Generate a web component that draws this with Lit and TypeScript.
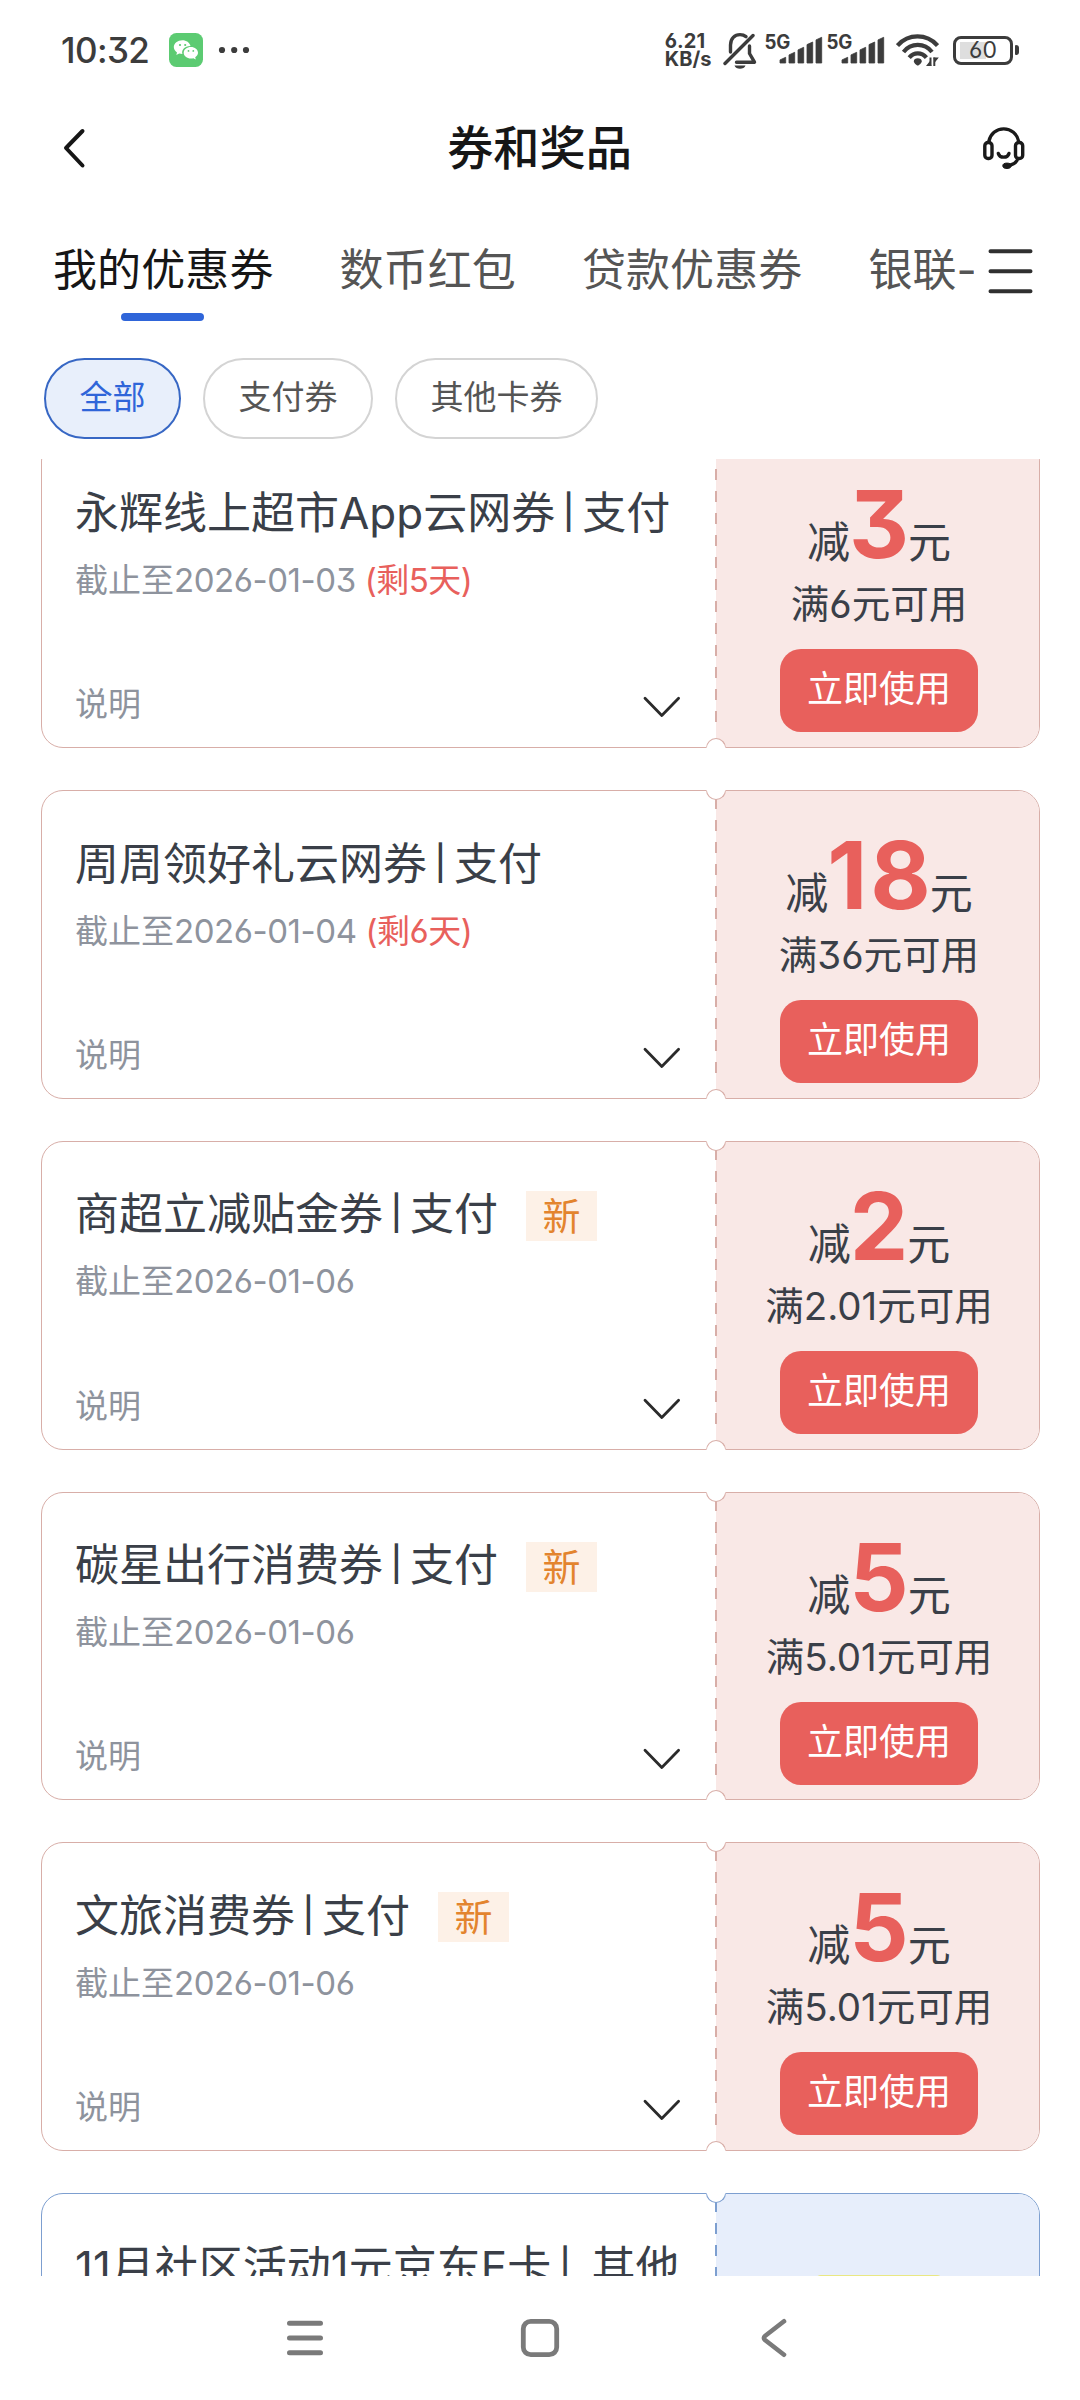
import { LitElement, html, css, svg, nothing } from "lit";
import { customElement, property, state } from "lit/decorators.js";
import { classMap } from "lit/directives/class-map.js";

interface Coupon {
  name: string;
  kind: string;
  until?: string;
  left?: string;
  fresh?: boolean;
  amount?: string;
  condition?: string;
  theme: "red" | "blue";
}

const COUPONS: Coupon[] = [
  { name: "永辉线上超市App云网券", kind: "支付", until: "2026-01-03", left: "(剩5天)", amount: "3", condition: "满6元可用", theme: "red" },
  { name: "周周领好礼云网券", kind: "支付", until: "2026-01-04", left: "(剩6天)", amount: "18", condition: "满36元可用", theme: "red" },
  { name: "商超立减贴金券", kind: "支付", until: "2026-01-06", fresh: true, amount: "2", condition: "满2.01元可用", theme: "red" },
  { name: "碳星出行消费券", kind: "支付", until: "2026-01-06", fresh: true, amount: "5", condition: "满5.01元可用", theme: "red" },
  { name: "文旅消费券", kind: "支付", until: "2026-01-06", fresh: true, amount: "5", condition: "满5.01元可用", theme: "red" },
  { name: "11月社区活动1元京东E卡", kind: " 其他", theme: "blue" },
];

@customElement("coupon-card")
export class CouponCard extends LitElement {
  @property({ attribute: false }) coupon!: Coupon;

  static styles = css`
    :host {
      display: block;
      flex: none;
    }
    .card {
      --line: #d8aea8;
      --tint: #f9e8e6;
      position: relative;
      box-sizing: border-box;
      height: 308.75px;
      display: grid;
      grid-template-columns: 673px 1fr;
      border: 1px solid var(--line);
      border-radius: 22px;
      background: #fff;
    }
    .card.blue {
      --line: #7d9fd0;
      --tint: #e7eefb;
    }
    .info {
      display: flex;
      flex-direction: column;
      padding: 42.5px 34px 20px 33px;
    }
    .title {
      display: flex;
      align-items: center;
      height: 60px;
      font-size: 44px;
      line-height: 60px;
      color: #3a3f48;
      white-space: pre;
    }
    .bar {
      display: inline-block;
      width: 27px;
      text-align: center;
      font-size: 34px;
      font-weight: 500;
      line-height: 1;
      vertical-align: 5px;
    }
    .blue .bar {
      width: 28px;
    }
    .tag {
      width: 71px;
      height: 50px;
      margin: 3px 0 0 28px;
      background: #fdf1e7;
      color: #e3842e;
      font-size: 38px;
      line-height: 50px;
      text-align: center;
    }
    .date {
      display: flex;
      gap: 9px;
      margin-top: 14px;
      font-size: 33px;
      line-height: 46px;
      color: #8e939d;
    }
    .day {
      letter-spacing: -0.45px;
    }
    .left {
      color: #e8605c;
      letter-spacing: -0.5px;
    }
    .more {
      display: flex;
      justify-content: space-between;
      align-items: center;
      margin-top: auto;
      font-size: 33px;
      line-height: 46px;
      color: #8e939d;
    }
    .more svg {
      width: 38px;
      height: 22px;
      margin-top: 6px;
    }
    .offer {
      display: flex;
      flex-direction: column;
      align-items: center;
      padding: 34px 0 0 4px;
      background:
        repeating-linear-gradient(to bottom, var(--line) 0 11px, transparent 11px 22px) 0 7px / 2px 286px no-repeat,
        linear-gradient(var(--tint), var(--tint)) 1px 0 / 100% 100% no-repeat;
      border-radius: 0 21px 21px 0;
      color: #3a3f48;
    }
    .amount {
      height: 100px;
      font-size: 93px;
      line-height: 100px;
      white-space: nowrap;
    }
    .unit {
      font-size: 43px;
      line-height: 1;
    }
    .value {
      font-weight: 700;
      color: #e8605c;
      line-height: 1;
      letter-spacing: 3px;
      margin: 0 -4px 0 -1px;
    }
    .condition {
      margin-top: 5px;
      font-size: 38.5px;
      line-height: 50px;
      white-space: nowrap;
    }
    .use {
      display: block;
      box-sizing: border-box;
      width: 198px;
      height: 83px;
      margin: 20px 0 0;
      padding: 0 0 3px;
      border: 0;
      border-radius: 21px;
      background: #e8605c;
      color: #fff;
      font: inherit;
      font-size: 36px;
      line-height: 80px;
    }
    .banner {
      width: 128px;
      height: 60px;
      margin-top: 46.5px;
      border-radius: 6px;
      background: #e9e883;
    }
    .notch {
      position: absolute;
      left: 664px;
      width: 20px;
      height: 10px;
      box-sizing: border-box;
      border: 1px solid var(--line);
      background: #fff;
    }
    .notch.top {
      top: -1px;
      border-top-color: #fff;
      border-radius: 0 0 10px 10px;
    }
    .notch.bottom {
      bottom: -1px;
      border-bottom-color: #fff;
      border-radius: 10px 10px 0 0;
    }
  `;

  render() {
    const c = this.coupon;
    return html`
      <article class=${classMap({ card: true, blue: c.theme === "blue" })}>
        <div class="info">
          <div class="title">
            <div>${c.name}<span class="bar">|</span>${c.kind}</div>
            ${c.fresh ? html`<div class="tag">新</div>` : nothing}
          </div>
          ${c.until
            ? html`<div class="date">
                <span>截止至<span class="day">${c.until}</span></span>${c.left ? html`<span class="left">${c.left}</span>` : nothing}
              </div>`
            : nothing}
          <div class="more">
            <span>说明</span>
            <svg viewBox="0 0 38 22" fill="none" stroke="#2b2b2b" stroke-width="2.8" stroke-linecap="round" stroke-linejoin="round">
              <path d="M2 2.2 18.8 19.4 35.600 2.200" />
            </svg>
          </div>
        </div>
        <div class="offer">
          ${c.amount
            ? html`<div class="amount"><span class="unit">减</span><span class="value">${c.amount}</span><span class="unit">元</span></div>
                <div class="condition">${c.condition}</div>
                <button class="use">立即使用</button>`
            : html`<div class="banner"></div>`}
        </div>
        <i class="notch top"></i>
        <i class="notch bottom"></i>
      </article>
    `;
  }
}

const signal = () => html`
  <svg class="signal" viewBox="0 0 58 34" fill="#3c3c3c">
    <text x="-0.6" y="15.6" font-size="19.5" font-weight="700" textLength="26" lengthAdjust="spacingAndGlyphs">5G</text>
    ${[24.5, 19.5, 14.5, 9.2, 4.5].map(
      (top, i) => svg`<path d=${`M${15 + i * 9} 30V${top + 2.4}l5.700-2.600V30z`} stroke="#3c3c3c" stroke-width=".8" stroke-linejoin="round"/>`
    )}
  </svg>
`;

@customElement("app-root")
export class AppRoot extends LitElement {
  @state() private tab = 0;
  @state() private filter = 0;

  static styles = css`
    :host {
      display: flex;
      flex-direction: column;
      width: 1080px;
      height: 2400px;
      overflow: hidden;
      background: #fff;
      color: #161616;
      font-family: Inter, "Noto Sans CJK SC", sans-serif;
      font-feature-settings: "cv09", "cv03";
    }
    .status {
      display: flex;
      align-items: center;
      box-sizing: border-box;
      height: 100px;
      padding: 0 61px 0 61px;
      color: #3c3c3c;
    }
    .time {
      width: 108px;
      font-size: 35px;
      font-weight: 500;
      line-height: 50px;
      letter-spacing: -0.6px;
    }
    .wechat {
      width: 34px;
      height: 34px;
    }
    .dots {
      width: 32px;
      height: 8px;
      margin-left: 15px;
    }
    .speed {
      margin-left: auto;
      width: 58px;
      font-size: 20px;
      font-weight: 700;
      line-height: 18.5px;
    }
    .bell {
      width: 34px;
      height: 37px;
      margin-right: 8px;
    }
    .signal {
      width: 58px;
      height: 34px;
      margin-right: 4.6px;
      overflow: visible;
    }
    .wifi {
      width: 43px;
      height: 34px;
      margin: 0 14px 0 6px;
    }
    .battery {
      box-sizing: border-box;
      width: 60px;
      height: 29px;
      border: 3px solid #3c3c3c;
      border-radius: 8px;
      text-align: center;
      font-size: 23px;
      line-height: 23px;
      background: linear-gradient(#dedede, #dedede) 3.5px center / 26px 17px no-repeat;
    }
    .nub {
      width: 4px;
      height: 10px;
      margin: 0 0 0 2px;
      border-radius: 1px 3px 3px 1px;
      background: #3c3c3c;
    }
    .head {
      display: flex;
      align-items: center;
      justify-content: space-between;
      box-sizing: border-box;
      height: 98px;
      padding: 0 54px 2px 62px;
    }
    .back {
      width: 42px;
      height: 42px;
    }
    .title {
      margin: 0 7px 0 0;
      font-size: 46.2px;
      font-weight: 500;
      line-height: 60px;
    }
    .service {
      width: 44px;
      height: 44px;
    }
    .tabs {
      display: flex;
      height: 136px;
      box-sizing: border-box;
      padding: 42px 46px 0 53px;
    }
    .strip {
      display: flex;
      width: 921px;
      gap: 66px;
      overflow: hidden;
    }
    .tab {
      display: flex;
      flex: none;
      flex-direction: column;
      align-items: center;
      font-size: 44px;
      letter-spacing: 0.1px;
      line-height: 60px;
      color: #555;
      white-space: nowrap;
    }
    .tab.on {
      color: #161616;
    }
    .tab.on::after {
      content: "";
      width: 83px;
      height: 8px;
      margin: 12.5px 2px 0 0;
      border-radius: 4px;
      background: #2f65d9;
    }
    .menu {
      width: 46px;
      height: 46px;
      margin: 8px 0 0 13px;
    }
    .filters {
      display: flex;
      gap: 22px;
      padding: 24px 0 20px 44px;
    }
    .chip {
      box-sizing: border-box;
      height: 81px;
      padding: 0 33.5px;
      border: 2px solid #d4d4d4;
      border-radius: 41px;
      font-size: 33px;
      line-height: 75px;
      color: #555;
    }
    .chip.on {
      border-color: #3767c4;
      background: #e8effb;
      color: #2f65d9;
    }
    .list {
      display: flex;
      flex: 1;
      min-height: 0;
      flex-direction: column;
      gap: 42px;
      padding: 0 40px 0 41px;
      overflow: hidden;
    }
    .list coupon-card:first-child {
      margin-top: -19.75px;
    }
    .nav {
      display: flex;
      justify-content: center;
      align-items: center;
      gap: 193px;
      height: 124px;
      background: #fff;
    }
    .nav svg {
      width: 42px;
      height: 42px;
    }
  `;

  render() {
    return html`
      <div class="status">
        <span class="time">10:32</span>
        <svg class="wechat" viewBox="0 0 34 34">
          <rect width="34" height="34" rx="7.5" fill="#5ccb72" />
          <path fill="#fff" d="M13.4 7.2c-4.8 0-8.6 3-8.6 6.9 0 2.2 1.2 4.1 3.2 5.4l-.7 2.6 2.9-1.5c1 .3 2.1.5 3.2.5-1.2-4.4 2.400-8.200 8.100-8.100-.8-3.400-4.100-5.800-8.100-5.800z" />
          <path fill="#fff" d="M21.900 14c-4 0-7.200 2.600-7.200 5.800s3.200 5.800 7.200 5.800c.9 0 1.700-.1 2.500-.400l2.400 1.300-.6-2.200c1.700-1.100 2.800-2.700 2.800-4.500 0-3.200-3.200-5.800-7.100-5.800z" />
          <g fill="#5ccb72">
            <circle cx="11" cy="12" r="1.1" /><circle cx="16.2" cy="12" r="1.1" />
            <circle cx="19.5" cy="17.9" r=".9" /><circle cx="24.3" cy="17.9" r=".9" />
          </g>
        </svg>
        <svg class="dots" viewBox="0 0 32 8" fill="#3c3c3c">
          <circle cx="4" cy="4" r="3.1" /><circle cx="16.2" cy="4" r="3.1" /><circle cx="28" cy="4" r="3.1" />
        </svg>
        <div class="speed">6.21<br />KB/s</div>
        <svg class="bell" viewBox="0 0 34 37" fill="none" stroke="#3c3c3c" stroke-width="3.4" stroke-linecap="round" stroke-linejoin="round">
          <path d="M2 31.500 30 3.500" />
          <path d="M7.500 20V13C7.500 6.500 11.800 2.600 17 2.600c2.400 0 4.400.7 6 2" />
          <path d="M26.500 14V21.500l5 8.700H13.500" />
          <path d="M11.500 33.400h11c-.8 2.100-2.900 3.300-5.500 3.300s-4.700-1.200-5.500-3.300z" fill="#3c3c3c" stroke="none" />
        </svg>
        ${signal()}${signal()}
        <svg class="wifi" viewBox="0 0 43 34" fill="none" stroke="#3c3c3c" stroke-width="4.2">
          <path d="M1.500 12.500C12.500.4 30.500.4 41.500 12.500" />
          <path d="M7.500 19C15 9.600 28.500 9.600 36 19" />
          <path d="M13.200 24.600c4.800-5.600 12.400-5.600 17.200 0" />
          <path d="M21.800 25.300c2.200 0 4 1.100 4 2.900 0 1.600-2.600 4.300-4 4.300s-4-2.700-4-4.300c0-1.800 1.800-2.900 4-2.900z" fill="#3c3c3c" stroke="none" />
          <path d="M34.500 24.500v8.500M38.300 33v-8.500" stroke-width="2" />
          <path d="M35.500 33h-5.500l4-5zM37.300 24.500h5.500l-4 5z" fill="#3c3c3c" stroke="none" />
        </svg>
        <div class="battery">60</div>
        <i class="nub"></i>
      </div>

      <header class="head">
        <svg class="back" viewBox="0 0 42 42" fill="none" stroke="#161616" stroke-width="4" stroke-linecap="round" stroke-linejoin="round">
          <path d="M20.500 4 4 21 20.500 38.500" />
        </svg>
        <h1 class="title">券和奖品</h1>
        <svg class="service" viewBox="0 0 44 44" fill="none" stroke="#1a1a1a" stroke-width="3.4" stroke-linecap="round">
          <rect x="2.800" y="16.500" width="7.200" height="16" rx="3.200" />
          <rect x="33.500" y="16.500" width="7.200" height="16" rx="3.200" />
          <path d="M6.800 15.500C8.300 7.800 14.400 2.900 21.700 2.900S35.200 7.800 36.700 15.500" />
          <path d="M16.300 27.400c1.500 5 9.200 5 10.700 0" />
          <path d="M35 34.500c-1.500 2.500-3.500 4-7 4.700" />
          <ellipse cx="25" cy="39.800" rx="4.200" ry="2.700" fill="#1a1a1a" stroke-width="1" />
        </svg>
      </header>

      <nav class="tabs">
        <div class="strip">
          ${["我的优惠券", "数币红包", "贷款优惠券", "银联-"].map(
            (t, i) => html`<div class=${classMap({ tab: true, on: i === this.tab })} @click=${() => (this.tab = i)}>${t}</div>`
          )}
        </div>
        <svg class="menu" viewBox="0 0 46 46" stroke="#303030" stroke-width="4" stroke-linecap="round">
          <path d="M3.500 3.200h40M3.500 23.200h40M3.500 43.200h40" />
        </svg>
      </nav>

      <div class="filters">
        ${["全部", "支付券", "其他卡券"].map(
          (t, i) => html`<div class=${classMap({ chip: true, on: i === this.filter })} @click=${() => (this.filter = i)}>${t}</div>`
        )}
      </div>

      <main class="list">${COUPONS.map((c) => html`<coupon-card .coupon=${c}></coupon-card>`)}</main>

      <footer class="nav">
        <svg viewBox="0 0 42 42" stroke="#7a7a7a" stroke-width="5" stroke-linecap="round">
          <path d="M5.500 6.300h31M5.500 21h31M5.500 35.700h31" />
        </svg>
        <svg viewBox="0 0 42 42" fill="none" stroke="#7a7a7a" stroke-width="4.800">
          <rect x="4.300" y="4.300" width="33.400" height="33.400" rx="7.500" />
        </svg>
        <svg viewBox="0 0 42 42" fill="none" stroke="#7a7a7a" stroke-width="4.600" stroke-linecap="round" stroke-linejoin="round">
          <path d="M30 4.300 11 19c-1.500 1.200-1.500 2.800 0 4L30 37.700" />
        </svg>
      </footer>
    `;
  }
}
